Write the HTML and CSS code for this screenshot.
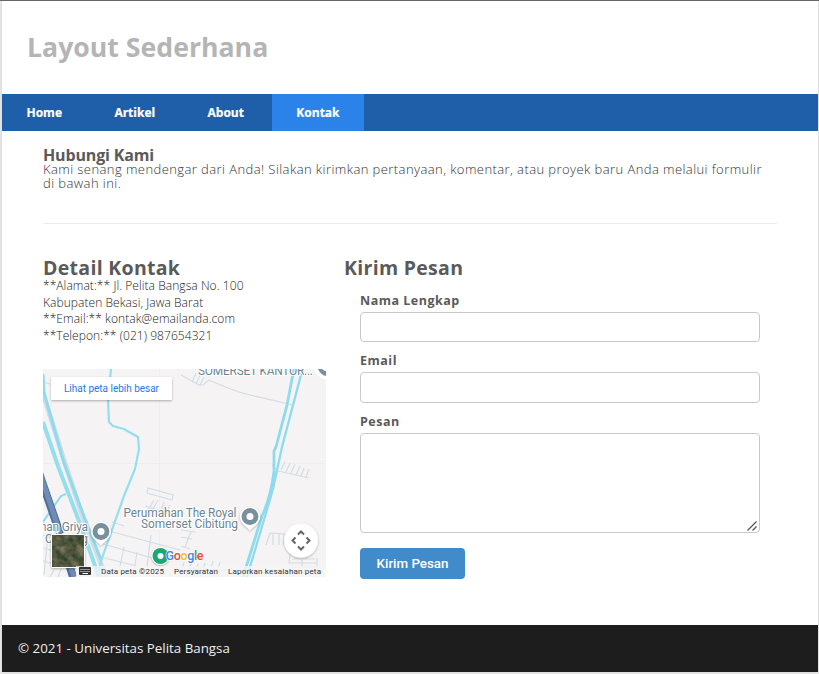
FILE: index.html
```html
<!DOCTYPE html>
<html lang="id">
<head>
<meta charset="utf-8">
<title>Kontak - Layout Sederhana</title>
<link rel="stylesheet" href="styles.css">
</head>
<body>
<div class="container">
  <header><h1>Layout Sederhana</h1></header>
  <nav>
    <a href="#">Home</a><a href="#">Artikel</a><a href="#">About</a><a href="#" class="active">Kontak</a>
  </nav>
  <main>
    <section class="intro">
      <h2>Hubungi Kami</h2>
      <p>Kami senang mendengar dari Anda! Silakan kirimkan pertanyaan, komentar, atau proyek baru Anda melalui formulir di bawah ini.</p>
    </section>
    <hr>
    <div class="columns">
      <section class="detail">
        <h3>Detail Kontak</h3>
        <p>**Alamat:** Jl. Pelita Bangsa No. 100</p>
        <p>Kabupaten Bekasi, Jawa Barat</p>
        <p>**Email:** kontak@emailanda.com</p>
        <p>**Telepon:** (021) 987654321</p>
        <svg class="map" viewBox="43 369 283 208" width="283" height="208">
          <defs>
            <filter id="shade" x="-20%" y="-30%" width="140%" height="170%"><feDropShadow dx="0" dy="1" stdDeviation="1" flood-opacity=".3"/></filter>
            <g id="pin"><path d="M0 14C-3 10-10 7-10 0A10 10 0 0 1 10 0C10 7 3 10 0 14Z" fill="#fff" filter="url(#shade)"/><circle r="8.400" fill="#78909c"/><circle r="3.500" fill="#fff"/></g>
            <filter id="grain" x="0" y="0" width="100%" height="100%" color-interpolation-filters="sRGB"><feTurbulence type="fractalNoise" baseFrequency=".13" numOctaves="3" seed="7"/><feColorMatrix values=".5 .1 0 0 .02  .35 .1 0 0 .12  .3 .1 0 0 .05  0 0 0 0 1"/></filter>
          </defs>
          <rect x="43" y="369" width="283" height="208" fill="#f5f3f4"/>
          <g fill="none" stroke="#efedef"><path d="M159.500 369V577M43 463.500H326"/></g>
          <g fill="none" stroke="#d3dde5" stroke-width="1.200">
            <path d="M181 375L199 385L203 385L209 380Q234 391 246 394L293 405M192 382L196 373M196 384L200 375M200 385L204 377M43 382L50 384"/>
            <path d="M278 471L309 478M281 470L285 462M286 472L290 463M291 473L295 464M296 475L300 466M301 476L304 468M306 477L309 469M272 465L278 471"/>
            <path d="M147 493L148 488L173 495L172 500L147 493M154 500L147 512M145 506L175 515M158 500L153 509M164 502L160 514M170 505L165 516"/>
            <path d="M109 531L180 550M103 544L166 562M97 556L136 566M112 522L124 526M137 552L133 577M124 547L119 571M151 535L146 575"/>
            <path d="M181 530L195 532M181 537L192 539M181 546L190 549M191 532L185 547M184 562L180 577M191 563L187 577M198 564L194 577M205 563L201 577M213 561L209 577M220 562L216 577M190 568L229 571"/>
            <path d="M266 545L270 533L288 534V545M273 534V545M279 534V545M284 534V545M290 554L289 563H316M292 559H315M291 567H317M317 558V577M302 560V567"/>
            <path d="M43 535L77 546M43 548L62 553M43 561L70 569M48 533L44 575M54 570L50 577M61 569L58 577M96 565L93 577M105 567L102 577"/>
          </g>
          <g fill="none">
            <path d="M43 393L62 454L82 515L106 577" stroke="#d7dce4" stroke-width="5"/>
            <path d="M43 422L58 466L82 529L99 577" stroke="#94dfee" stroke-width="4"/>
            <path d="M43 374L44 393L64 463L85 519L101 560" stroke="#8edbed" stroke-width="3"/>
            <path d="M43 522L61 496L66 494" stroke="#8edbed" stroke-width="2"/>
            <path d="M111 369L108 400L109 422L113 426L124 429L138 437L139 449L135 469L124 496L101 561L98 577" stroke="#94dfee" stroke-width="2.200"/>
            <path d="M294 369L287 405L276 447L274 451L274 472Q270 500 262 516L253 545L243 577" stroke="#8edbed" stroke-width="2.800"/>
            <path d="M302 371L282 447L273 489L261 530L247 577" stroke="#8edbed" stroke-width="2.300"/>
            <path d="M39 473L57 525L73 577" stroke="#526f99" stroke-width="8"/>
            <path d="M40 473L57 524L74 577" stroke="#6f8db4" stroke-width="5"/>
          </g>
          <g class="place">
            <text x="198" y="375" textLength="115">SOMERSET KANTOR...</text>
            <text x="123.500" y="516.500" textLength="113">Perumahan The Royal</text>
            <text x="141" y="528" textLength="97">Somerset Cibitung</text>
            <text x="36" y="531" textLength="52">man Griya</text>
            <text x="45" y="543" textLength="43">Cibitung</text>
          </g>
          <path d="M315 368Q319 377 326 378" fill="none" stroke="#fff" stroke-width="3"/><path d="M318 369Q321 375 326 376V369Z" fill="#78909c"/><path d="M322 369Q324 371 326 371V369Z" fill="#fff"/>
          <use href="#pin" x="101" y="531.500"/><use href="#pin" x="250" y="516.500"/>
          <circle cx="160.500" cy="556" r="9" fill="#fff" filter="url(#shade)"/><circle cx="160.500" cy="556" r="8" fill="#1aa773"/><circle cx="160.500" cy="556" r="3" fill="#fff"/>
          <rect x="51" y="377" width="121" height="23" rx="1" fill="#fff" filter="url(#shade)"/>
          <text class="bigger" x="64" y="392" textLength="95">Lihat peta lebih besar</text>
          <rect x="51" y="534" width="34" height="34" rx="2" fill="#fff" filter="url(#shade)"/>
          <rect x="52" y="535" width="32" height="32" filter="url(#grain)"/>
          <circle cx="301" cy="540.500" r="17" fill="#fff" filter="url(#shade)"/>
          <path d="M298 534.500L301 531.500L304 534.500M298 546.500L301 549.500L304 546.500M295.500 537.500L292.500 540.500L295.500 543.500M306.500 537.500L309.500 540.500L306.500 543.500" fill="none" stroke="#666" stroke-width="2"/>
          <text class="google" x="165.500" y="559.500" textLength="38"><tspan fill="#4285f4">G</tspan><tspan fill="#ea4335">o</tspan><tspan fill="#fbbc04">o</tspan><tspan fill="#4285f4">g</tspan><tspan fill="#34a853">l</tspan><tspan fill="#ea4335">e</tspan></text>
          <path d="M76 566H326V577H76Z" fill="#f5f5f5" fill-opacity=".75"/>
          <rect x="79" y="567" width="12" height="8" rx="1" fill="#333"/>
          <path d="M80.500 569.500H90M80.500 571.500H90" stroke="#fff" stroke-dasharray="1 1"/><path d="M82.500 573.500H88" stroke="#fff"/>
          <g class="legal"><text x="101" y="574" textLength="63">Data peta ©2025</text><text x="174" y="574" textLength="44">Persyaratan</text><text x="228" y="574" textLength="93">Laporkan kesalahan peta</text></g>
        </svg>
      </section>
      <section class="message">
        <h3>Kirim Pesan</h3>
        <form>
          <label for="nama">Nama Lengkap</label><input id="nama" type="text">
          <label for="email">Email</label><input id="email" class="email" type="email">
          <label for="pesan">Pesan</label>
          <div class="area"><textarea id="pesan"></textarea><svg class="grip" viewBox="0 0 10 10" width="10" height="10"><path d="M.5 9.500L9.500 .5M5.500 9.500L9.500 5.500" stroke="#555" stroke-width="1.300"/></svg></div>
          <button type="button">Kirim Pesan</button>
        </form>
      </section>
    </div>
  </main>
  <footer>© 2021 - Universitas Pelita Bangsa</footer>
</div>
</body>
</html>
```
FILE: styles.css
```css
* { margin: 0; padding: 0; box-sizing: border-box; }
body { background: #ececec; border-top: 1px solid #666; height: 674px; overflow: hidden; font-family: "Open Sans", sans-serif; color: #5a5a5a; }
.container { width: 816px; height: 671px; margin-left: 2px; background: #fff; box-shadow: 0 0 4px #ccc; display: flex; flex-direction: column; }
header { height: 93px; padding: 27px 25px 0; }
h1 { font-size: 26.670px; line-height: 38px; color: #b5b5b5; }
nav { height: 37px; background: #1f5faa; display: flex; gap: 3.400px; }
nav a { padding: 0 24.500px; font-size: 12px; line-height: 37px; font-weight: 700; color: #fff; text-decoration: none; -webkit-text-stroke: .2px #fff; }
nav .active { background: #2b83ea; }
main { flex: 1; padding: 17px 41px 0; }
.intro { height: 75px; }
h2 { font-size: 16px; line-height: 15px; letter-spacing: -.15px; }
.intro p { font-size: 13px; line-height: 14px; font-weight: 300; letter-spacing: .425px; margin-top: -1px; color: #333; }
hr { border: 0; border-top: 1px solid #ececec; }
.columns { display: flex; padding-top: 33px; }
.detail { width: 301px; }
h3 { font-size: 19.500px; line-height: 22px; letter-spacing: .3px; }
.detail p { font-size: 12px; line-height: 16.600px; font-weight: 300; letter-spacing: .06px; position: relative; top: -1px; color: #222; }
.map { display: block; margin-top: 24px; }
.place { font: 12px Roboto, sans-serif; fill: #6c8491; stroke: #fff; stroke-width: 2px; paint-order: stroke; }
.bigger { font: 10px Roboto, sans-serif; fill: #2878e8; }
.google { font: 500 12.500px Roboto, sans-serif; stroke: #fff; stroke-width: 1px; paint-order: stroke; }
.legal { font: 8px Roboto, sans-serif; fill: #333; }
.message { flex: 1; }
form { padding: 13px 0 0 16px; width: 416px; display: flex; flex-direction: column; }
label { font-size: 12.500px; line-height: 18px; font-weight: 700; letter-spacing: .5px; margin-bottom: 2px; }
input, textarea { border: 1px solid #c9c9c9; border-radius: 4px; background: #fff; }
input { height: 30px; margin-bottom: 10px; }
.email { height: 31px; margin-bottom: 10px; }
.area { position: relative; height: 100px; margin-bottom: 15px; }
textarea { display: block; width: 100%; height: 100px; resize: none; }
.grip { position: absolute; right: 3px; bottom: 2px; }
button { width: 105px; height: 31px; border: 0; border-radius: 4px; background: #428bca; color: #fff; font: 500 13.330px Roboto, sans-serif; }
footer { height: 47px; background: #1d1d1d; color: #eee; font-size: 13.330px; line-height: 47px; padding-left: 16px; }
```
